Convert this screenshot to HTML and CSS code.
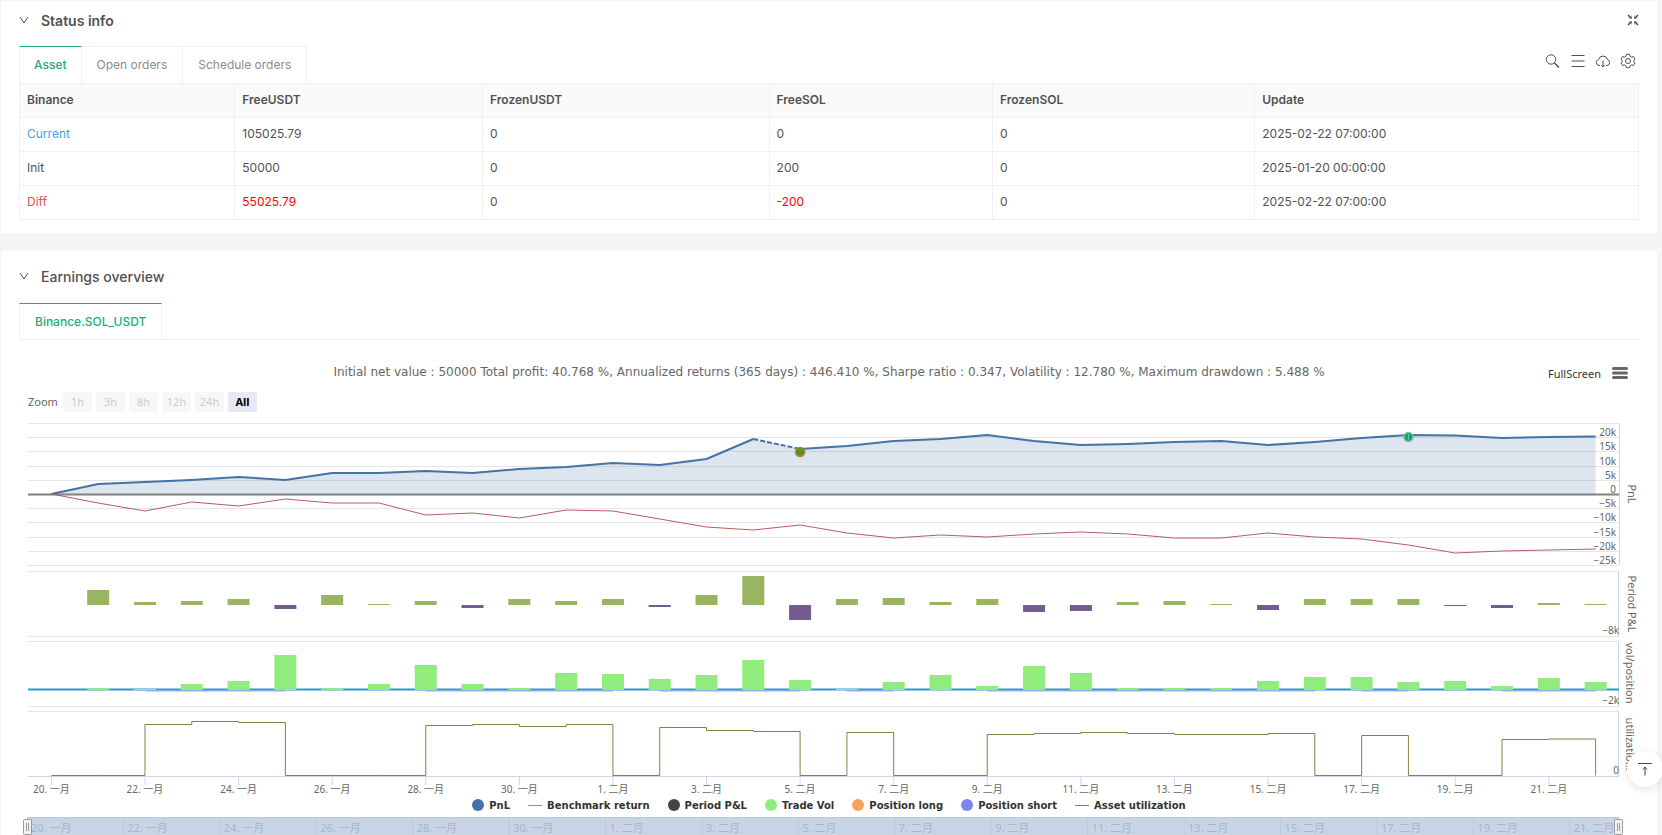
FILE: index.html
```html
<!DOCTYPE html>
<html lang="en">

<head>
    <meta charset="UTF-8">
    <title>Backtest result</title>
    <link rel="stylesheet" href="styles.css">
</head>

<body>
    <section class="card">
        <div class="card-head">
            <svg class="chevron" viewBox="0 0 10 10"><path d="M1 2l4 6 4-6" /></svg>
            <h2 class="strong">Status info</h2>
            <button class="icon-btn shrink" aria-label="Shrink">
                <svg viewBox="0 0 12 12"><path d="M1 1l3.500 3.500M11 1L7.500 4.500M1 11l3.500-3.500M11 11L7.500 7.500" class="thick" /><path d="M1.500 4h3V1.500M7.500 1.500V4h3M4.500 10.500V8h-3M7.500 10.500V8h3" class="thin" /></svg>
            </button>
        </div>
        <div class="tab-bar">
            <div class="tabs" role="tablist">
                <button class="tab active" role="tab">Asset</button>
                <button class="tab" role="tab">Open orders</button>
                <button class="tab" role="tab">Schedule orders</button>
            </div>
            <div class="tools">
                <button class="icon-btn" aria-label="Search">
                    <svg viewBox="0 0 16 16"><circle cx="6" cy="6.500" r="4.700" /><path d="M9.500 10l4.500 4.500" class="thick" /></svg>
                </button>
                <button class="icon-btn" aria-label="Columns">
                    <svg viewBox="0 0 16 16"><path d="M1.500 2.500h13M1.500 8h13M1.500 13.500h13" /></svg>
                </button>
                <button class="icon-btn" aria-label="Download">
                    <svg viewBox="0 0 16 16"><path d="M5 12.500H4a3 3 0 0 1-.4-5.900 4.500 4.500 0 0 1 8.800 0A3 3 0 0 1 12 12.500h-1M8 7.500v6.500M6.200 12.200L8 14l1.800-1.800" /></svg>
                </button>
                <button class="icon-btn" aria-label="Settings">
                    <svg viewBox="0 0 16 16"><path d="M6.400 1.300h3.200l.5 2 1.300.8 2-.6 1.600 2.800-1.500 1.400v.6l1.500 1.400-1.600 2.800-2-.6-1.300.8-.5 2H6.400l-.5-2-1.300-.8-2 .6L1 9.700l1.500-1.400v-.6L1 6.300l1.600-2.800 2 .6 1.300-.8z" /><circle cx="8" cy="8" r="2.500" /></svg>
                </button>
            </div>
        </div>
        <table class="asset">
            <colgroup>
                <col class="col-name">
                <col class="col-free">
                <col class="col-frozen">
                <col class="col-free-coin">
                <col class="col-frozen-coin">
                <col>
            </colgroup>
            <thead>
                <tr>
                    <th>Binance</th>
                    <th>FreeUSDT</th>
                    <th>FrozenUSDT</th>
                    <th>FreeSOL</th>
                    <th>FrozenSOL</th>
                    <th>Update</th>
                </tr>
            </thead>
            <tbody>
                <tr>
                    <td class="current">Current</td>
                    <td>105025.79</td>
                    <td>0</td>
                    <td>0</td>
                    <td>0</td>
                    <td>2025-02-22 07:00:00</td>
                </tr>
                <tr>
                    <td>Init</td>
                    <td>50000</td>
                    <td>0</td>
                    <td>200</td>
                    <td>0</td>
                    <td>2025-01-20 00:00:00</td>
                </tr>
                <tr>
                    <td class="diff">Diff</td>
                    <td class="changed">55025.79</td>
                    <td>0</td>
                    <td class="changed">-200</td>
                    <td>0</td>
                    <td>2025-02-22 07:00:00</td>
                </tr>
            </tbody>
        </table>
    </section>

    <section class="card earnings">
        <div class="card-head">
            <svg class="chevron" viewBox="0 0 10 10"><path d="M1 2l4 6 4-6" /></svg>
            <h2>Earnings overview</h2>
        </div>
        <div class="tab-bar lined">
            <div class="tabs" role="tablist">
                <button class="tab active" role="tab">Binance.SOL_USDT</button>
            </div>
        </div>
        <div class="chart-head">
            <p class="chart-title">Initial net value : 50000 Total profit: 40.768 %, Annualized returns (365 days) : 446.410 %, Sharpe ratio : 0.347, Volatility : 12.780 %, Maximum drawdown : 5.488 %</p>
            <div class="chart-menu">
                <button class="full-btn">FullScreen</button>
                <button class="icon-btn bars" aria-label="Chart menu">
                    <svg viewBox="0 0 16 14"><path d="M1.500 2.500h13M1.500 7h13M1.500 11.500h13" /></svg>
                </button>
            </div>
        </div>
        <div class="range">
            <span>Zoom</span>
            <button disabled>1h</button>
            <button disabled>3h</button>
            <button disabled>8h</button>
            <button disabled>12h</button>
            <button disabled>24h</button>
            <button class="selected">All</button>
        </div>
        <svg id="chart" class="chart"></svg>
        <div class="legend">
            <button><i class="dot pnl"></i>PnL</button>
            <button><i class="line benchmark"></i>Benchmark return</button>
            <button><i class="dot period"></i>Period P&amp;L</button>
            <button><i class="dot vol"></i>Trade Vol</button>
            <button><i class="dot long"></i>Position long</button>
            <button><i class="dot short"></i>Position short</button>
            <button><i class="line util"></i>Asset utilization</button>
        </div>
        <svg id="navigator" class="navigator"></svg>
    </section>

    <button class="to-top" aria-label="Back to top">
        <svg viewBox="0 0 14 14"><path d="M0 1.500h14" /><path d="M7 13.500V5M5 7.500L7 5l2 2.500" /></svg>
    </button>

    <script src="script.js"></script>
</body>

</html>
```

FILE: styles.css
```css
* {
    box-sizing: border-box;
}

body {
    margin: 0;
    padding: 1px 5px 0 1px;
    background-color: #f4f5f7;
    color: #515151;
    font-family: Inter, "Liberation Sans", sans-serif;
    font-size: 12px;
}

button {
    margin: 0;
    padding: 0;
    border: none;
    background: none;
    font: inherit;
    color: inherit;
    cursor: pointer;
}

.card {
    padding: 0 18px 13px;
    background-color: white;
}

.card.earnings {
    margin-top: 18px;
    padding-bottom: 0;
}

.card-head {
    display: flex;
    align-items: center;
    height: 38px;
    margin-bottom: 7px;
}

.earnings .card-head {
    height: 50px;
    margin-bottom: 2px;
}

.card-head h2 {
    margin: 0;
    font-size: 14px;
    font-weight: 500;
}

.card-head h2.strong {
    font-weight: 600;
}

.chevron {
    width: 10px;
    height: 10px;
    margin-right: 12px;
    fill: none;
    stroke: #515151;
}

.icon-btn svg {
    display: block;
    width: 16px;
    height: 16px;
    fill: none;
    stroke: #515151;
}

.icon-btn .thin {
    stroke-width: 0.5;
}

.icon-btn .thick {
    stroke-width: 1.5;
}

.icon-btn.shrink {
    margin-left: auto;
}

.icon-btn.shrink svg {
    width: 12px;
    height: 12px;
}

/* tabs */
.tab-bar {
    display: flex;
    justify-content: space-between;
    height: 37px;
}

.tab-bar.lined {
    border-bottom: 1px solid #f0f0f0;
}

.tabs {
    display: flex;
}

.tab {
    padding: 0 15px 2px;
    border-top: 1px solid #f0f0f0;
    border-right: 1px solid #f0f0f0;
    font-size: 12px;
    color: #8c8c8c;
}

.tab:first-child {
    padding: 0 14px 2px;
    border-left: 1px solid #f0f0f0;
}

.lined .tab:first-child {
    padding: 0 15px;
}

.tab.active {
    border-top-color: #1aae7c;
    color: #1aae7c;
    font-weight: 500;
}

.tools {
    display: flex;
    align-items: center;
    gap: 9px;
    padding: 0 3px 8px 0;
}

/* asset table */
.asset {
    width: 100%;
    table-layout: fixed;
    border-collapse: collapse;
}

.asset th,
.asset td {
    height: 34px;
    padding: 0 7px 2px;
    border: 1px solid #f0f0f0;
    text-align: left;
}

.asset th {
    background-color: #fafafa;
    font-weight: 600;
}

.col-name {
    width: 13.3%;
}

.col-free {
    width: 15.3%;
}

.col-frozen {
    width: 17.7%;
}

.col-free-coin {
    width: 13.8%;
}

.col-frozen-coin {
    width: 16.2%;
}

.asset .current {
    color: #4f9bea;
}

.asset .diff {
    color: #e0544c;
}

.asset .changed {
    color: #ff0000;
}

/* chart */
.chart-head,
.range,
.chart,
.legend,
.navigator {
    font-family: "Noto Sans", "Noto Sans CJK SC", sans-serif;
}

.chart-head {
    display: grid;
    grid-template-columns: 1fr auto 1fr;
    align-items: center;
    height: 36px;
    margin-top: 15px;
}

.chart-title {
    grid-column: 2;
    margin: 0;
    padding-bottom: 2px;
    font-family: "DejaVu Sans", sans-serif;
    font-size: 12px;
    color: #666666;
}

.chart-menu {
    display: flex;
    justify-content: flex-end;
    align-items: center;
    gap: 11px;
    padding-right: 11px;
}

.full-btn {
    font-size: 11px;
    color: #333333;
}

.icon-btn.bars svg {
    height: 14px;
    stroke: #666666;
    stroke-width: 3;
    stroke-linecap: round;
}

.range {
    display: flex;
    align-items: center;
    gap: 4px;
    height: 29px;
    padding: 0 0 8px 9px;
    font-size: 11px;
    color: #666666;
}

.range span {
    width: 31px;
}

.range button {
    width: 29px;
    height: 20px;
    border-radius: 2px;
    background-color: #f7f7f7;
}

.range button:disabled {
    color: #cccccc;
}

.range .selected {
    background-color: #e6e9f5;
    color: black;
    font-weight: bold;
}

.chart,
.navigator {
    display: block;
    width: 100%;
}

.chart {
    height: 376px;
    fill: none;
}

.chart text {
    fill: #666666;
    font-size: 10px;
}

.chart .axis-title {
    font-size: 11px;
}

.grid {
    stroke: #e6e6e6;
}

.axis {
    stroke: #ccd6eb;
}

.zero {
    stroke: #808080;
    stroke-width: 2;
}

.pnl-area {
    fill: #4572a7;
    fill-opacity: 0.18;
}

.pnl-line {
    stroke: #4572a7;
    stroke-width: 2;
}

.pnl-line.dashed {
    stroke-dasharray: 5 2;
}

.benchmark-line {
    stroke: #b85c5c;
}

.gain {
    fill: #99b560;
}

.loss {
    fill: #755c8e;
}

.vol-bar {
    fill: #90ed7d;
}

.long-line {
    stroke: #2f97cf;
    stroke-width: 2;
}

.short-line {
    stroke: #8085e9;
    stroke-opacity: 0.7;
}

.util-line {
    stroke: #8a7d45;
}

.flag {
    fill: #0cb80c;
    stroke-width: 1.5;
}

.flag-sell {
    stroke: #f0624d;
}

.flag-buy {
    stroke: #7cb5ec;
}

.legend {
    display: flex;
    justify-content: center;
    gap: 18px;
    height: 20px;
    padding-bottom: 2px;
    margin-bottom: 1px;
    font-family: "DejaVu Sans", sans-serif;
    font-size: 10px;
    font-weight: bold;
    color: #333333;
}

.legend button {
    display: flex;
    align-items: center;
    gap: 5px;
}

.dot {
    width: 12px;
    height: 12px;
    border-radius: 50%;
}

.line {
    width: 14px;
    height: 1px;
}

.pnl {
    background-color: #4572a7;
}

.benchmark {
    background-color: #c97c7c;
}

.period {
    background-color: #434348;
}

.vol {
    background-color: #90ed7d;
}

.long {
    background-color: #f7a35c;
}

.short {
    background-color: #8085e9;
}

.util {
    background-color: #8a7d45;
}

.navigator {
    height: 40px;
}

.navigator text {
    fill: #a9b6c8;
    font-size: 11px;
}

.mask {
    fill: #c8d4e5;
}

.nav-grid {
    stroke: #bccadb;
}

.handle {
    fill: #f2f2f2;
    stroke: #999999;
}

.to-top {
    position: fixed;
    right: -1px;
    bottom: 48px;
    display: flex;
    align-items: center;
    justify-content: center;
    width: 36px;
    height: 36px;
    border-radius: 50%;
    background-color: white;
    box-shadow: 0 2px 8px rgba(0, 0, 0, 0.12);
}

.to-top svg {
    width: 14px;
    height: 14px;
    fill: none;
    stroke: #444444;
}
```

FILE: script.js
```js
// one value per day, 20 Jan - 22 Feb, in pixels from the zero line of the pane
var pnl = [0, 10, 12, 14, 17, 14, 21, 21, 23, 21, 25, 27, 31, 29, 35, 55, 45, 48, 53, 55, 59, 53, 49, 50, 52, 53, 49, 52, 56, 59, 58.5, 56, 57, 57.5];
var benchmark = [0, -9, -17, -8, -12, -5, -9, -9, -21, -19, -24, -16, -17, -25, -33, -36, -31, -39, -44, -41, -43, -40, -38, -40, -44, -44, -39, -43, -45, -51, -59, -57, -56, -55];
var period = [0, 15, 3, 4, 6, -4, 10, 1, 4, -3, 6, 4, 6, -2, 10, 29, -15, 6, 7, 3, 6, -7, -6, 3, 4, 1, -5, 6, 6, 6, -1, -3, 2, 1];
var vol = [0, 2, 1, 6, 9, 35, 2, 6, 25, 6, 2, 17, 16, 11, 15, 30, 10, 1, 8, 15, 4, 24, 17, 2, 2, 2, 9, 13, 13, 8, 9, 4, 12, 8];
var util = [0, 0, 51, 54, 53, 0, 0, 0, 50, 51, 49, 51, 0, 48, 45, 44, 0, 43, 0, 0, 41, 42, 43, 42, 41, 41, 42, 0, 40, 0, 0, 36, 36.5, 0];

var chart = document.getElementById('chart');
var nav = document.getElementById('navigator');

function line(x1, y1, x2, y2, cls) {
    return `<line x1="${x1}" y1="${y1}" x2="${x2}" y2="${y2}" class="${cls}"/>`;
}

function rect(x, y, w, h, cls) {
    return `<rect x="${x}" y="${y}" width="${w}" height="${h}" class="${cls}"/>`;
}

function text(x, y, str, anchor) {
    return `<text x="${x}" y="${y}" text-anchor="${anchor}">${str}</text>`;
}

function axisTitle(x, y, str) {
    return `<text class="axis-title" text-anchor="middle" transform="translate(${x} ${y}) rotate(90)">${str}</text>`;
}

function dayLabel(i) {
    return i < 12 ? (20 + i) + '. 一月' : (i - 11) + '. 二月';
}

function drawChart() {
    var width = chart.clientWidth;
    var left = 9;
    var right = width - 20;
    var step = (right - left) / pnl.length;
    var barWidth = Math.round(step * 0.48);
    var x = i => left + step * (i + 0.5);
    var out = '';

    // PnL pane
    var zero = 74;
    var labels = ['', '20k', '15k', '10k', '5k', '0', '−5k', '−10k', '−15k', '−20k', '−25k'];
    labels.forEach(function (label, i) {
        var y = Math.round(3 + i * 14.2) + 0.5;
        out += line(left, y, right, y, 'grid');
    });
    var points = pnl.map((v, i) => x(i) + ',' + (zero - v));
    out += `<polygon points="${x(0)},${zero} ${points.join(' ')} ${x(33)},${zero}" class="pnl-area"/>`;
    out += line(left, zero + 0.5, right, zero + 0.5, 'zero');
    out += `<polyline points="${points.slice(0, 16).join(' ')}" class="pnl-line"/>`;
    out += `<polyline points="${points.slice(15, 17).join(' ')}" class="pnl-line dashed"/>`;
    out += `<polyline points="${points.slice(16).join(' ')}" class="pnl-line"/>`;
    out += `<polyline points="${benchmark.map((v, i) => x(i) + ',' + (zero - v)).join(' ')}" class="benchmark-line"/>`;
    out += `<circle cx="${x(16)}" cy="32" r="4.500" class="flag flag-sell"/>` + line(x(16), 29, x(16), 35, 'flag-sell');
    out += `<circle cx="${x(29)}" cy="17" r="4.500" class="flag flag-buy"/>` + line(x(29), 14, x(29), 20, 'flag-buy');
    labels.forEach(function (label, i) {
        out += text(right - 3, Math.round(2 + i * 14.2), label, 'end');
    });
    out += line(right + 0.5, 3, right + 0.5, 145, 'axis');

    // the three lower panes
    [[151, 216, '−8k'], [221, 286, '−2k'], [291, 356, '0']].forEach(function (pane, i) {
        out += line(left, pane[0] + 0.5, right, pane[0] + 0.5, 'grid');
        out += line(left, pane[1] + 0.5, right, pane[1] + 0.5, i == 2 ? 'axis' : 'grid');
        out += line(right - 0.5, pane[0], right - 0.5, pane[1], 'axis');
        out += text(right, pane[1] - 2, pane[2], 'end');
    });

    period.forEach(function (v, i) {
        if (v > 0) out += rect(x(i) - barWidth / 2, 185 - v, barWidth, v, 'gain');
        if (v < 0) out += rect(x(i) - barWidth / 2, 185, barWidth, -v, 'loss');
    });

    out += line(left, 269.5, right, 269.5, 'long-line');
    vol.forEach(function (v, i) {
        if (v) out += rect(x(i) - barWidth / 2, 270 - v, barWidth, v, 'vol-bar');
        if (util[i]) out += line(x(i), 271, x(i + 1), 271, 'short-line');
    });

    var path = 'M' + x(0) + ' 355.500';
    util.forEach(function (v, i) {
        path += 'H' + x(i) + 'V' + (355.5 - v);
    });
    out += `<path d="${path}" class="util-line"/>`;

    for (var i = 0; i < pnl.length; i += 2) {
        out += line(x(i), 357, x(i), 365, 'axis');
        out += text(x(i), 373, dayLabel(i), 'middle');
    }

    out += axisTitle(width - 11, 74, 'PnL');
    out += axisTitle(width - 11, 184, 'Period P&amp;L');
    out += axisTitle(width - 13, 253, 'vol/position');
    out += axisTitle(width - 13, 324, 'utilizatio…');
    chart.innerHTML = out;
}

function drawNavigator() {
    var right = nav.clientWidth - 20;
    var step = (right - 9) / 33 * 2;
    var out = rect(8, 0, right - 8, 40, 'mask');
    out += line(8, 0.5, right, 0.5, 'nav-grid');
    for (var i = 0; i < 17; i++) {
        if (i) out += line(8 + step * i, 0, 8 + step * i, 40, 'nav-grid');
        out += text(12 + step * i, 15, dayLabel(i * 2), 'start');
    }
    [8, right - 1].forEach(function (x) {
        out += `<rect x="${x - 3.5}" y="2.500" width="8" height="15" rx="1" class="handle"/>`;
        out += line(x - 0.5, 6, x - 0.5, 14, 'handle') + line(x + 1.5, 6, x + 1.5, 14, 'handle');
    });
    nav.innerHTML = out;
}

function draw() {
    drawChart();
    drawNavigator();
}

window.addEventListener('resize', draw);
draw();
```
